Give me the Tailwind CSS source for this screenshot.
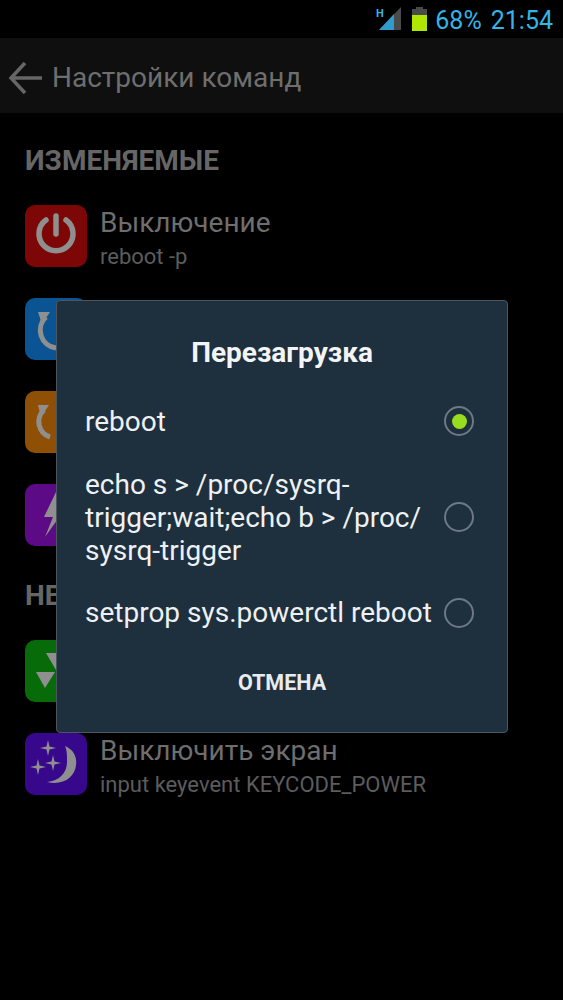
<!DOCTYPE html>
<html lang="en">

<head>
    <meta charset="UTF-8" />
    <meta name="viewport" content="width=device-width, initial-scale=1.0" />
    <title>Настройки команд</title>
    <script src="https://cdn.jsdelivr.net/npm/@tailwindcss/browser@4"></script>
</head>

<body class="bg-black font-['Roboto',sans-serif] w-[563px] h-[1000px] overflow-hidden relative">

    <!-- Status bar -->
    <div class="h-[38px] bg-black flex items-center justify-end pr-[10px] pt-[2px] text-[#33b5e5] text-[25px] leading-none">
        <svg width="40" height="32" viewBox="0 0 40 32" class="mr-[5px] -mt-[2px]">
            <text x="10" y="14" font-size="11" font-weight="700" fill="#33b5e5" font-family="Roboto">H</text>
            <path d="M13 27 L35 4 V27 Z" fill="#4a4a4a" />
            <path d="M13 27 L28 11 V27 Z" fill="#2f9ccb" />
        </svg>
        <svg width="17" height="26" viewBox="0 0 17 26" class="mr-[7px] -mt-[2px]">
            <rect x="5" y="1" width="7" height="3" fill="#4a4a4a" />
            <rect x="1" y="3" width="15" height="6" fill="#4a4a4a" />
            <rect x="1" y="9" width="15" height="16" fill="#aee800" />
        </svg>
        <span class="mr-[9px]">68%</span>
        <span>21:54</span>
    </div>

    <!-- Action bar -->
    <div class="h-[75px] bg-[#0f0f0f] flex items-center pl-[8px] pt-[4px]">
        <svg width="36" height="36" viewBox="0 0 36 36" class="mr-[8px]" fill="none" stroke="#666" stroke-width="3.5">
            <path d="M34 18 H3 M17 3 L3 18 L17 33" />
        </svg>
        <span class="text-[28px] text-[#6e6e6e] leading-none">Настройки команд</span>
    </div>

    <!-- Settings list -->
    <div class="pl-[25px]">
        <div class="h-[92px] pt-[3px] flex items-center text-[28px] font-bold text-[#666] leading-none">ИЗМЕНЯЕМЫЕ</div>

        <div class="flex flex-col gap-[31px]">
            <div class="h-[62px] flex items-center gap-[13px]">
                <div class="w-[62px] h-[62px] rounded-[10px] bg-[#7d0606]">
                    <svg width="62" height="62" viewBox="0 0 62 62" fill="none" stroke="#8f8f8f" stroke-width="5.5" stroke-linecap="round">
                        <path d="M21 15 A17 17 0 1 0 41 15" />
                        <path d="M31 11 V29" />
                    </svg>
                </div>
                <div class="mt-[8px]">
                    <div class="text-[28px] text-[#6e6e6e] leading-[34px]">Выключение</div>
                    <div class="text-[22px] text-[#5c5c5c] leading-[34px]">reboot -p</div>
                </div>
            </div>

            <div class="h-[62px]">
                <div class="w-[62px] h-[62px] rounded-[10px] bg-[#0a5493]">
                    <svg width="62" height="62" viewBox="0 0 62 62" fill="none">
                        <path d="M13 14 L25 14 L17 26 Z" fill="#8f8f8f" />
                        <path d="M21 19 A18 18 0 0 0 31 50" stroke="#8f8f8f" stroke-width="5" />
                    </svg>
                </div>
            </div>

            <div class="h-[62px]">
                <div class="w-[62px] h-[62px] rounded-[10px] bg-[#8f5006]">
                    <svg width="62" height="62" viewBox="0 0 62 62" fill="none">
                        <path d="M13 14 L24 14 L16 26 Z" fill="#8f8f8f" />
                        <path d="M19 19 A16 16 0 0 0 25 46" stroke="#8f8f8f" stroke-width="5" />
                    </svg>
                </div>
            </div>

            <div class="h-[62px]">
                <div class="w-[62px] h-[62px] rounded-[10px] bg-[#5c0a85]">
                    <svg width="62" height="62" viewBox="0 0 62 62">
                        <path d="M31 8 L19 33 L28 33 L20 53 L40 25 L31 25 Z" fill="#8f8f8f" />
                    </svg>
                </div>
            </div>
        </div>

        <div class="h-[94px] pt-[5px] flex items-center w-[31px] overflow-hidden whitespace-nowrap text-[28px] font-bold text-[#666] leading-none">НЕИЗМЕНЯЕМЫЕ</div>

        <div class="flex flex-col gap-[31px]">
            <div class="h-[62px]">
                <div class="w-[62px] h-[62px] rounded-[10px] bg-[#076b0a]">
                    <svg width="62" height="62" viewBox="0 0 62 62">
                        <path d="M11 32 H30 L20 48 Z" fill="#8f8f8f" />
                        <path d="M21 13 L41 13 L31 30 Z" fill="#8f8f8f" />
                    </svg>
                </div>
            </div>

            <div class="h-[62px] flex items-center gap-[13px]">
                <div class="w-[62px] h-[62px] rounded-[10px] bg-[#37088c]">
                    <svg width="62" height="62" viewBox="0 0 62 62" fill="#8f8f8f">
                        <path d="M40 13 C50 17 52 26 51 32 C50 44 38 53 22 49 C34 48 42 40 42 29 C42 22 42 17 40 13 Z" />
                        <path d="M23 7 L24.5 13.5 L31 15 L24.5 16.5 L23 23 L21.5 16.5 L15 15 L21.5 13.5 Z" />
                        <path d="M28 22 L29.5 28.5 L36 30 L29.5 31.5 L28 38 L26.5 31.5 L20 30 L26.5 28.5 Z" />
                        <path d="M13 26 L14.5 32.5 L21 34 L14.5 35.5 L13 42 L11.5 35.5 L5 34 L11.5 32.5 Z" />
                    </svg>
                </div>
                <div class="mt-[8px]">
                    <div class="text-[28px] text-[#6e6e6e] leading-[34px]">Выключить экран</div>
                    <div class="text-[22px] text-[#5c5c5c] leading-[34px] whitespace-nowrap">input keyevent KEYCODE_POWER</div>
                </div>
            </div>
        </div>
    </div>

    <!-- Reboot dialog -->
    <div class="absolute left-[56px] top-[300px] w-[452px] h-[433px] bg-[#1e2f3d] border border-[#4a5660] rounded-[4px] text-[#eef1f3]">
        <div class="h-[103px] flex items-center justify-center text-[28px] font-bold leading-none text-[#f2f4f5]">Перезагрузка</div>

        <div class="flex items-center pl-[28px] pr-[33px] h-[34px]">
            <span class="flex-1 pt-[2px] text-[28px] leading-[34px]">reboot</span>
            <span class="w-[30px] h-[30px] rounded-full border-2 border-[#6d7a85] flex items-center justify-center">
                <span class="w-[15px] h-[15px] rounded-full bg-[#97dc1e]"></span>
            </span>
        </div>

        <div class="flex items-center pl-[28px] pr-[33px] mt-[28px]">
            <span class="flex-1 pt-[2px] text-[28px] leading-[33px]">echo s &gt; /proc/sysrq-<br />trigger;wait;echo b &gt; /proc/<br />sysrq-trigger</span>
            <span class="w-[30px] h-[30px] rounded-full border-2 border-[#6d7a85]"></span>
        </div>

        <div class="flex items-center pl-[28px] pr-[33px] mt-[29px] h-[34px]">
            <span class="flex-1 text-[28px] leading-[34px] whitespace-nowrap">setprop sys.powerctl reboot</span>
            <span class="w-[30px] h-[30px] rounded-full border-2 border-[#6d7a85]"></span>
        </div>

        <div class="h-[64px] mt-[21px] flex items-center justify-center text-[21.5px] font-bold text-[#e8ecee] leading-none">ОТМЕНА</div>
    </div>

</body>

</html>
